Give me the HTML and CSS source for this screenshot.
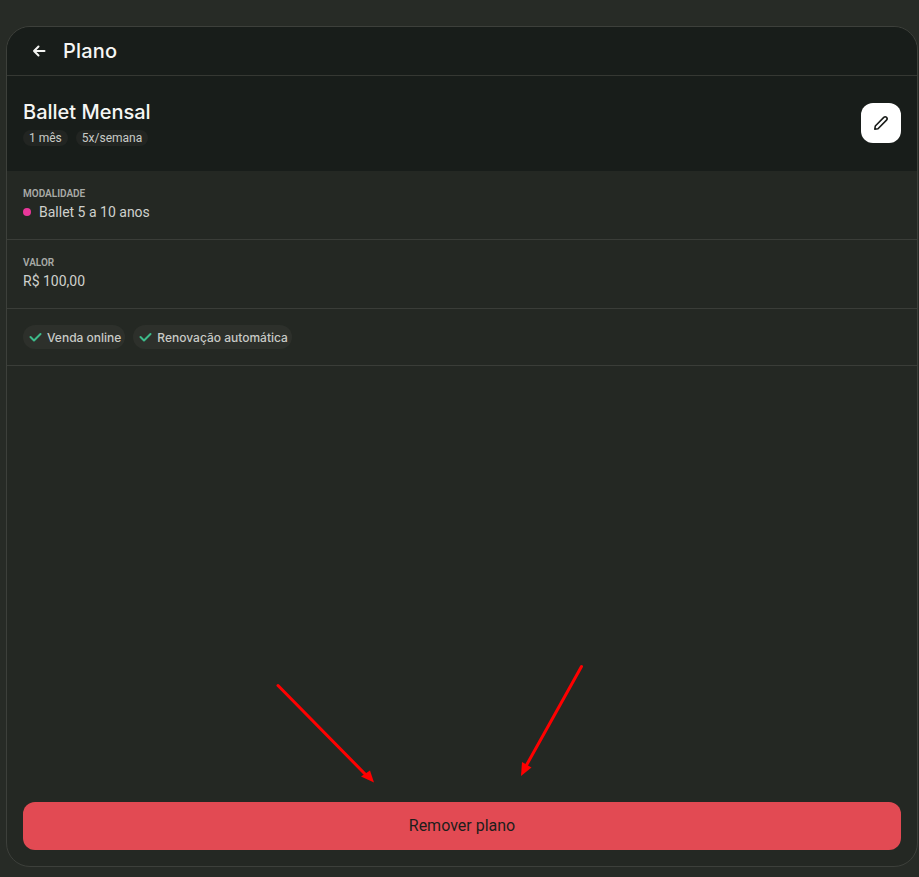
FILE: index.html
```html
<!DOCTYPE html>
<html lang="pt-BR">
<head>
<meta charset="utf-8">
<title>Plano</title>
<link rel="stylesheet" href="styles.css">
</head>
<body>
<main class="card">
  <header class="topbar">
    <svg class="back" viewBox="0 0 16 16" width="16" height="16" fill="none" stroke="#f4f5f3" stroke-width="2" stroke-linecap="round" stroke-linejoin="round"><path d="M13.5 8H3M7.5 3.5 3 8l4.5 4.5"/></svg>
    <h1 class="title">Plano</h1>
  </header>
  <section class="hero">
    <div class="hero-text">
      <h2 class="name">Ballet Mensal</h2>
      <div class="tags">
        <span class="tag">1 mês</span>
        <span class="tag">5x/semana</span>
      </div>
    </div>
    <button class="edit" type="button" aria-label="Editar">
      <svg viewBox="0 0 16 16" width="16" height="16" fill="none" stroke="#1a1d1a" stroke-width="1.6" stroke-linejoin="round" stroke-linecap="round"><path d="M1.8 14.2 2.3 11 10.8 2.4a1.8 1.8 0 0 1 2.7 2.7L5 13.7Z"/></svg>
    </button>
  </section>
  <section class="row">
    <div class="label">MODALIDADE</div>
    <div class="value"><span class="dot"></span>Ballet 5 a 10 anos</div>
  </section>
  <section class="row">
    <div class="label">VALOR</div>
    <div class="value">R$ 100,00</div>
  </section>
  <section class="chips">
    <span class="chip"><svg viewBox="0 0 14 14" width="14" height="14" fill="none" stroke="#3dbb8a" stroke-width="2" stroke-linecap="round" stroke-linejoin="round"><path d="M1.5 7 5 10.5 11.5 4"/></svg>Venda online</span>
    <span class="chip"><svg viewBox="0 0 14 14" width="14" height="14" fill="none" stroke="#3dbb8a" stroke-width="2" stroke-linecap="round" stroke-linejoin="round"><path d="M1.5 7 5 10.5 11.5 4"/></svg>Renovação automática</span>
  </section>
  <div class="spacer"></div>
  <footer class="actions">
    <button class="remove" type="button">Remover plano</button>
  </footer>
</main>
<svg class="arrows" viewBox="0 0 919 877" width="919" height="877" aria-hidden="true">
  <path d="M278 685.5 367 776M581.5 666.5 526 766" stroke="#ff0000" stroke-width="3" stroke-linecap="round" fill="none"/>
  <path d="M374 782.5 361 776.5 370 770.5Z" fill="#ff0000"/>
  <path d="M521 776 522 762 531.5 767.5Z" fill="#ff0000"/>
</svg>
</body>
</html>
```
FILE: styles.css
```css
* { box-sizing: border-box; }
html, body { margin: 0; height: 100%; }
body {
  position: relative;
  background: #272b26;
  padding: 26px 1px 10px 6px;
  font-family: Roboto, "Liberation Sans", sans-serif;
  color: #d4d6d2;
  overflow: hidden;
}
.card {
  height: 841px;
  display: flex;
  flex-direction: column;
  background: #242823;
  border: 1px solid #3d403b;
  border-radius: 24px;
  overflow: hidden;
}
.topbar {
  height: 49px;
  flex: none;
  display: flex;
  align-items: center;
  padding: 0 16px 0 24px;
  gap: 16px;
  background: #181d1a;
  border-bottom: 1px solid #353833;
}
.back { flex: none; }
.title, .name {
  margin: 0;
  font-family: Inter, sans-serif;
  font-weight: 500;
  color: #f5f6f4;
}
.title { font-size: 20px; letter-spacing: 0.2px; }
.name { font-size: 20px; line-height: 24px; }
.hero {
  height: 95px;
  flex: none;
  display: flex;
  align-items: center;
  justify-content: space-between;
  padding: 0 16px 1px;
  background: #181d1a;
}
.hero-text { display: flex; flex-direction: column; gap: 6px; }
.tags { display: flex; gap: 8px; }
.tag {
  height: 16px;
  line-height: 16px;
  padding: 0 6px;
  border-radius: 8px;
  background: #222522;
  font-size: 12px;
  color: #c9cbc7;
}
.edit {
  width: 40px;
  height: 40px;
  display: flex;
  align-items: center;
  justify-content: center;
  padding: 0;
  border: 0;
  border-radius: 12px;
  background: #fff;
}
.row {
  height: 69px;
  flex: none;
  padding: 17px 16px 0;
  border-bottom: 1px solid #3a3d38;
}
.label {
  font-size: 10px;
  line-height: 12px;
  font-weight: 600;
  color: #a9aba7;
}
.value {
  display: flex;
  align-items: center;
  margin-top: 2px;
  font-size: 14px;
  line-height: 20px;
  color: #cfd1cd;
}
.dot {
  width: 8px;
  height: 8px;
  margin-right: 8px;
  border-radius: 50%;
  background: #e9379a;
}
.chips {
  height: 57px;
  flex: none;
  display: flex;
  align-items: center;
  gap: 8px;
  padding: 0 16px;
  border-bottom: 1px solid #3a3d38;
}
.chip {
  height: 24px;
  display: flex;
  align-items: center;
  gap: 4px;
  padding: 0 4px 0 6px;
  border-radius: 12px;
  background: #2d302b;
  font-family: Inter, sans-serif;
  font-size: 12px;
  font-weight: 500;
  color: #c8cac6;
}
.spacer { flex: 1; }
.actions { flex: none; padding: 0 16px 16px; }
.remove {
  display: block;
  width: 100%;
  height: 48px;
  padding: 0 0 1px;
  border: 0;
  border-radius: 12px;
  background: #e24a53;
  font-family: Roboto, sans-serif;
  font-size: 16px;
  font-weight: 400;
  color: #1c1e1b;
}
.arrows {
  position: absolute;
  left: 0;
  top: 0;
  pointer-events: none;
}
```
